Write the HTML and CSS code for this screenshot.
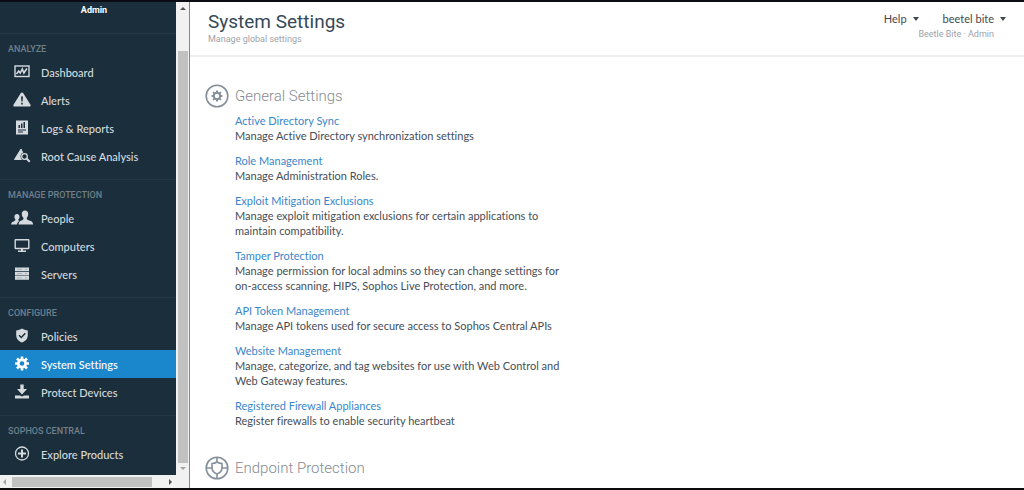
FILE: index.html
```html
<!DOCTYPE html>
<html lang="en">
<head>
    <meta charset="UTF-8">
    <meta name="viewport" content="width=device-width, initial-scale=1.0">
    <title>System Settings</title>
    <link rel="stylesheet" href="styles.css">
</head>
<body>
    <div class="sidebar">
        <div class="sidebar-row">
            <nav class="nav">
                <div class="role">Admin</div>

                <div class="nav-group">
                    <h2>ANALYZE</h2>
                    <a href="#">
                        <svg viewBox="0 0 24 16"><rect x="5" y="2" width="14" height="10.500" fill="none" stroke="currentColor" stroke-width="1.4"/><path d="M6.5 10l2.200-3 1.600 2 2-4 1.600 4 3-4.500" fill="none" stroke="currentColor" stroke-width="1.6"/></svg>
                        Dashboard
                    </a>
                    <a href="#">
                        <svg viewBox="0 0 24 16"><path d="M12 .5c-.6 0-1 .3-1.300.8L3.500 12.700c-.5 1 0 1.800 1 1.800h15c1 0 1.500-.8 1-1.800L13.300 1.300C13 .8 12.600.5 12 .5z" fill="currentColor"/><path d="M11 4.500h2l-.4 5h-1.200zM11.200 10.700h1.600v1.800h-1.600z" fill="#1b2e3c"/></svg>
                        Alerts
                    </a>
                    <a href="#">
                        <svg viewBox="0 0 24 16"><path d="M6 .5h12v14H6z" fill="currentColor"/><path d="M8.500 5h1.500v3H8.500zM11 3.500h1.500V8H11zM13.500 2H15v6h-1.500zM8 9.500h8v1H8zM8 11.500h5v1H8z" fill="#1b2e3c"/></svg>
                        Logs &amp; Reports
                    </a>
                    <a href="#">
                        <svg viewBox="0 0 24 16"><path d="M11 1L4.500 11.500H16z" fill="currentColor" stroke="currentColor" stroke-linejoin="round"/><circle cx="14.500" cy="8.500" r="3.900" fill="#1b2e3c"/><circle cx="14.500" cy="8.500" r="2.800" fill="#1b2e3c" stroke="currentColor" stroke-width="1.300"/><path d="M16.500 10.500l3.200 3.200" stroke="currentColor" stroke-width="2"/></svg>
                        Root Cause Analysis
                    </a>
                </div>

                <div class="nav-group">
                    <h2>MANAGE PROTECTION</h2>
                    <a href="#">
                        <svg viewBox="0 0 24 16"><path d="M15 .5c2 0 3.200 1.300 3.200 3.500 0 1.800-.7 3.200-1.500 4 0 1.500.5 1.900 2.500 2.500 2.500.7 3.700 1.500 4 4H8.500c.2-2.500 1.300-3.300 3-4 1.800-.7 2-1.200 2-2.500-.9-.8-1.700-2.200-1.700-4C11.800 1.800 13 .5 15 .5z" fill="currentColor"/><path d="M7 4c1.500 0 2.500 1 2.500 2.700 0 1.200-.5 2.100-1.200 2.800 0 .9.300 1.100 1 1.400-1.500.9-2 2-2.300 3.600H1c.3-1.800 1-2.600 2.500-3.100 1.500-.6 1.900-.9 1.900-1.900-.6-.7-1-1.600-1-2.800C4.400 5 5.500 4 7 4z" fill="currentColor"/></svg>
                        People
                    </a>
                    <a href="#">
                        <svg viewBox="0 0 24 16"><rect x="5.200" y="1.700" width="13.600" height="8.800" rx=".5" fill="none" stroke="currentColor" stroke-width="1.400"/><path d="M11 10.500h2v2h3V14H8v-1.500h3z" fill="currentColor"/></svg>
                        Computers
                    </a>
                    <a href="#">
                        <svg viewBox="0 0 24 16"><path d="M5 1.500h14v3.600H5zM5 5.800h14v3.600H5zM5 10.100h14v3.600H5z" fill="currentColor"/><path d="M7 3.300h5M7 7.600h5M7 11.900h5M15 3.300h2M15 7.600h2M15 11.900h2" stroke="#a3adb4" stroke-width=".9"/></svg>
                        Servers
                    </a>
                </div>

                <div class="nav-group">
                    <h2>CONFIGURE</h2>
                    <a href="#">
                        <svg viewBox="0 0 24 16"><path d="M12 .5c1.800 1.200 3.600 1.800 5.800 1.900V7c0 3.800-2.300 6.200-5.800 7.500C8.500 13.200 6.200 10.800 6.200 7V2.400C8.400 2.300 10.200 1.700 12 .5z" fill="currentColor"/><path d="M9 7.200l2.300 2.300 4-4.300" fill="none" stroke="#1b2e3c" stroke-width="1.400"/></svg>
                        Policies
                    </a>
                    <a href="#" class="active">
                        <svg viewBox="0 0 24 16"><circle cx="12" cy="7.500" r="3.700" fill="none" stroke="currentColor" stroke-width="2.800"/><path d="M12 .5v3M12 11.500v3M5 7.500h3M16 7.500h3M7 2.500l2.200 2.200M14.800 10.300l2.200 2.200M7 12.500l2.200-2.200M14.800 4.700L17 2.500" stroke="currentColor" stroke-width="2.600"/></svg>
                        System Settings
                    </a>
                    <a href="#">
                        <svg viewBox="0 0 24 16"><path d="M10.300.5h3.400V5H17l-5 5.500L7 5h3.300zM5 11.500h5l2 1 2-1h5v3H5z" fill="currentColor"/></svg>
                        Protect Devices
                    </a>
                </div>

                <div class="nav-group">
                    <h2>SOPHOS CENTRAL</h2>
                    <a href="#">
                        <svg viewBox="0 0 24 16"><circle cx="12" cy="7.500" r="6.500" fill="none" stroke="currentColor" stroke-width="1.300"/><path d="M12 3.500v8M8 7.500h8" stroke="currentColor" stroke-width="2"/></svg>
                        Explore Products
                    </a>
                </div>
            </nav>
            <div class="scroll scroll-y">
                <i class="arrow up"></i>
                <i class="thumb"></i>
                <i class="arrow down"></i>
            </div>
        </div>
        <div class="scroll scroll-x">
            <i class="arrow left"></i>
            <i class="thumb"></i>
            <i class="arrow right"></i>
        </div>
    </div>

    <div class="main">
        <header>
            <div>
                <h1>System Settings</h1>
                <p class="sub">Manage global settings</p>
            </div>
            <div class="menus">
                <div class="menu-row">
                    <button type="button">Help <i class="caret"></i></button>
                    <button type="button">beetel bite <i class="caret"></i></button>
                </div>
                <p class="sub">Beetle Bite · Admin</p>
            </div>
        </header>

        <main>
            <section>
                <h2>
                    <svg viewBox="0 0 24 24"><circle cx="12" cy="12" r="10.800" fill="none" stroke="currentColor" stroke-width="1.600"/><circle cx="12" cy="12" r="3.200" fill="none" stroke="currentColor" stroke-width="2"/><path d="M12 6.500V9M12 15v2.500M6.500 12H9M15 12h2.500M8.100 8.100l1.800 1.800M14.100 14.100l1.800 1.800M8.100 15.900l1.800-1.800M14.100 9.900l1.800-1.800" stroke="currentColor" stroke-width="2"/></svg>
                    General Settings
                </h2>
                <div class="setting">
                    <a href="#">Active Directory Sync</a>
                    <p>Manage Active Directory synchronization settings</p>
                </div>
                <div class="setting">
                    <a href="#">Role Management</a>
                    <p>Manage Administration Roles.</p>
                </div>
                <div class="setting">
                    <a href="#">Exploit Mitigation Exclusions</a>
                    <p>Manage exploit mitigation exclusions for certain applications to maintain compatibility.</p>
                </div>
                <div class="setting">
                    <a href="#">Tamper Protection</a>
                    <p>Manage permission for local admins so they can change settings for on-access scanning, HIPS, Sophos Live Protection, and more.</p>
                </div>
                <div class="setting">
                    <a href="#">API Token Management</a>
                    <p>Manage API tokens used for secure access to Sophos Central APIs</p>
                </div>
                <div class="setting">
                    <a href="#">Website Management</a>
                    <p>Manage, categorize, and tag websites for use with Web Control and Web Gateway features.</p>
                </div>
                <div class="setting">
                    <a href="#">Registered Firewall Appliances</a>
                    <p>Register firewalls to enable security heartbeat</p>
                </div>
            </section>

            <section>
                <h2>
                    <svg viewBox="0 0 24 24"><circle cx="12" cy="12" r="10.800" fill="none" stroke="currentColor" stroke-width="1.600"/><path d="M7 7.500c2 0 3.500-.5 5-1.500 1.500 1 3 1.500 5 1.500V12c0 3-2 4.800-5 6-3-1.200-5-3-5-6zM12 1v5M12 18v5M1 12h6M17 12h6" fill="none" stroke="currentColor" stroke-width="1.600"/></svg>
                    Endpoint Protection
                </h2>
            </section>
        </main>
    </div>
</body>
</html>
```

FILE: styles.css
```css
* {
    box-sizing: border-box;
}
body {
    display: flex;
    height: 100vh;
    margin: 0;
    border-top: 2px solid #0c0c14;
    border-bottom: 2px solid #0c0c0c;
    font-family: Lato, "Liberation Sans", sans-serif;
    font-size: 11px;
    font-variant-ligatures: none;
    line-height: 15px;
    color: #454e58;
    background-color: #fff;
    overflow: hidden;
}
h1, h2, p {
    margin: 0;
    font-weight: normal;
}
a {
    color: #3a86cb;
    text-decoration: none;
}

/* sidebar */
.sidebar {
    display: flex;
    flex-direction: column;
    flex: none;
    width: 190px;
    border-right: 1px solid #7d8990;
    background-color: #f1f1f1;
}
.sidebar-row {
    display: flex;
    flex: 1;
    min-height: 0;
}
.nav {
    flex: 1;
    background-color: #1b2e3c;
    overflow: hidden;
}
.role {
    height: 31px;
    padding: 1px 0 0 12px;
    font-family: Roboto, sans-serif;
    font-size: 9px;
    font-weight: bold;
    text-align: center;
    color: #fff;
}
.nav-group {
    padding-bottom: 9px;
    border-top: 1px solid #233846;
}
.nav-group h2 {
    height: 24px;
    padding: 8px 8px 0;
    font-family: Roboto, sans-serif;
    font-size: 9px;
    font-weight: 500;
    color: #6f808b;
}
.nav-group a {
    display: flex;
    align-items: center;
    gap: 7px;
    height: 28px;
    padding-left: 10px;
    font-weight: 500;
    color: #d4dade;
}
.nav-group svg {
    width: 24px;
    height: 16px;
}
.nav-group a.active {
    color: #fff;
    background-color: #1a87cd;
}

/* scrollbars */
.scroll {
    display: flex;
    align-items: center;
    background-color: #f1f1f1;
}
.scroll-y {
    flex-direction: column;
    width: 13px;
    padding: 5px 0;
}
.scroll-x {
    height: 13px;
    padding: 0 17px 0 3px;
}
.thumb {
    background-color: #c1c1c1;
}
.scroll-y .thumb {
    width: 10px;
    height: 89%;
    margin: auto 0 4px;
}
.scroll-x .thumb {
    width: 140px;
    height: 10px;
    margin: 0 auto 0 6px;
}
.arrow {
    border: 3px solid transparent;
}
.up {
    border-top: 0;
    border-bottom-color: #505050;
}
.down {
    border-bottom: 0;
    border-top-color: #a3a3a3;
}
.left {
    border-left: 0;
    border-right-color: #a3a3a3;
}
.right {
    border-right: 0;
    border-left-color: #505050;
}

/* page header */
.main {
    flex: 1;
}
header {
    display: flex;
    justify-content: space-between;
    height: 55px;
    padding: 7px 18px 0;
    border-bottom: 2px solid #eee;
}
h1 {
    font-family: Roboto, sans-serif;
    font-size: 19px;
    line-height: 25px;
    color: #364957;
}
.sub {
    font-family: Roboto, sans-serif;
    font-size: 9px;
    line-height: 10px;
    color: #9da3a9;
}
.menus {
    padding-top: 2px;
}
.menu-row {
    display: flex;
    gap: 24px;
}
.menus button {
    display: flex;
    align-items: center;
    gap: 6px;
    padding: 0;
    border: 0;
    background: none;
    font: inherit;
    color: #3f4850;
}
.menus .sub {
    padding: 3px 12px 0 0;
    text-align: right;
}
.caret {
    border: 3px solid transparent;
    border-top: 4px solid #3f4850;
    border-bottom: 0;
}

/* settings list */
main {
    padding: 24px 15px 0;
}
section {
    margin-bottom: 25px;
}
section h2 {
    display: flex;
    align-items: center;
    gap: 6px;
    height: 30px;
    margin-bottom: 2px;
    font-family: Roboto, sans-serif;
    font-size: 15px;
    font-weight: 300;
    color: #858b92;
}
section h2 svg {
    width: 24px;
    height: 24px;
    color: #83909b;
}
.setting {
    width: 370px;
    margin-bottom: 10px;
    padding-left: 30px;
}
.setting a {
    display: block;
    width: max-content;
}
```
